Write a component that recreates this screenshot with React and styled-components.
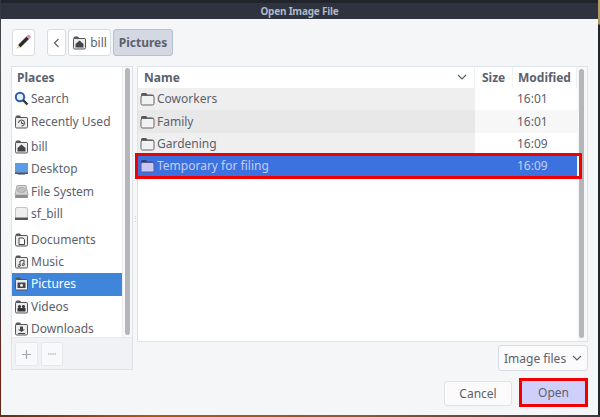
import React from "react";
import styled, { createGlobalStyle } from "styled-components";

const Global = createGlobalStyle`
  html, body { margin: 0; padding: 0; background: #2b2b30; }
  * { box-sizing: border-box; }
`;

const Page = styled.div`
  width: 600px;
  height: 417px;
  overflow: hidden;
  padding-left: 1px;
  padding-right: 2px;
  background:
    linear-gradient(90deg, #5a3414, #b4560f 25%, #8a5a2a 60%, #3a3a40) bottom / 100% 2px no-repeat,
    linear-gradient(180deg, #b5a46a 0, #a8975f 24px, #23252c 25px, #23252c 100%) right / 2px 100% no-repeat,
    linear-gradient(180deg, #2f3340 0, #555 60px, #3a3a42 300px, #7a1e10 370px, #5a2a18 100%);
  font-family: "Noto Sans", "Open Sans", sans-serif;
  font-size: 12px;
  color: #5c616c;
`;

const Dialog = styled.div`
  height: 415px;
  background: #f5f6f7;
  display: flex;
  flex-direction: column;
`;

const TitleBar = styled.div`
  height: 19px;
  background: #2f3340;
  border-top: 3px solid #22242b;
  color: #aeb8c8;
  font-size: 10px;
  font-weight: 700;
  letter-spacing: -0.2px;
  display: flex;
  align-items: center;
  justify-content: center;
`;

const Toolbar = styled.div`
  height: 47px;
  padding: 10px 0 0 11px;
  display: flex;
  align-items: flex-start;
`;

const Crumb = styled.div`
  height: 27px;
  width: ${(p) => p.$w}px;
  margin-right: ${(p) => p.$gap || 0}px;
  display: flex;
  align-items: center;
  justify-content: center;
  gap: 3px;
  background: ${(p) => (p.$active ? "#d3d8e2" : "#fff")};
  border: 1px solid ${(p) => (p.$active ? "#b8bfcc" : "#d6dbe4")};
  border-radius: 3px;
  font-weight: ${(p) => (p.$active ? 700 : 400)};
`;

const Body = styled.div`
  display: flex;
  height: 312px;
  padding-left: 10px;
`;

const Side = styled.div`
  width: 122px;
  height: 304px;
  display: flex;
  flex-direction: column;
  border: 1px solid #dfe2e8;
`;

const SideScrollArea = styled.div`
  flex: 1;
  display: flex;
  min-height: 0;
  background: #fff;
`;

const Places = styled.div`
  width: 111px;
  flex: none;
  overflow: hidden;
  border-right: 1px solid #eceef1;
`;

const PlacesTitle = styled.div`
  height: 21px;
  padding: 2px 0 0 5px;
  font-weight: 700;
`;

const Place = styled.div`
  height: 22.4px;
  display: flex;
  align-items: center;
  gap: 2px;
  padding: 0 0 1px 2px;
  margin-top: ${(p) => p.$gap || 0}px;
  background: ${(p) => (p.$selected ? "#3f85da" : "transparent")};
  color: ${(p) => (p.$selected ? "#fff" : "#5c616c")};
`;

const SideTrack = styled.div`
  flex: 1;
  padding: 1px 2px;
  background: #f7f8f9;
`;

const Thumb = styled.div`
  width: 5px;
  height: ${(p) => p.$h}px;
  background: #b5b6b8;
  border-radius: 3px;
`;

const SideActions = styled.div`
  height: 32px;
  padding: 4px 3px;
  display: flex;
  gap: 3px;
  background: #f0f2f5;
  border-top: 1px solid #e6e8ec;
`;

const SmallButton = styled.div`
  width: ${(p) => p.$w}px;
  height: 24px;
  background: #f8f9fa;
  border: 1px solid #e6e8ec;
  border-radius: 2px;
  display: flex;
  align-items: center;
  justify-content: center;
`;

const Handle = styled.div`
  width: 4px;
  height: 304px;
  display: flex;
  align-items: center;
  justify-content: center;
  color: #c2c5ca;
  font-size: 7px;
`;

const Right = styled.div`
  width: 451px;
  display: flex;
  flex-direction: column;
`;

const Files = styled.div`
  height: 276px;
  display: flex;
  background: #fff;
  border: 1px solid #dfe2e8;
`;

const Table = styled.div`
  width: 439px;
  flex: none;
  position: relative;
`;

const HeaderRow = styled.div`
  height: 21px;
  display: flex;
  font-weight: 700;
  background: #fff;
`;

const HeaderCell = styled.div`
  width: ${(p) => p.$w}px;
  flex: ${(p) => (p.$grow ? 1 : "none")};
  display: flex;
  align-items: center;
  justify-content: space-between;
  padding: 0 ${(p) => (p.$grow ? 7 : 0)}px 1px ${(p) => p.$pad}px;
  border-right: 1px solid #f0f1f3;
`;

const Row = styled.div`
  height: 22.4px;
  display: flex;
  align-items: center;
  background: ${(p) => (p.$selected ? "#3b72e0" : p.$odd ? "#f7f7f8" : "#fff")};
  color: ${(p) => (p.$selected ? "#c5cdf0" : "#5c616c")};
`;

const NameCell = styled.div`
  width: 337px;
  height: 100%;
  display: flex;
  align-items: center;
  gap: 2px;
  padding: 0 0 1px 2px;
  background: ${(p) => (p.$selected ? "transparent" : p.$odd ? "#e8e8e8" : "#efefef")};
`;

const TimeCell = styled.div`
  margin-left: 42px;
  padding-bottom: 1px;
`;

const Highlight = styled.div`
  position: absolute;
  left: -3px;
  right: -5px;
  top: 86px;
  height: 26px;
  border: 3px solid #f00000;
  pointer-events: none;
`;

const FileTrack = styled.div`
  flex: 1;
  padding: 2px 2px;
  background: #f7f8f9;
`;

const Filter = styled.div`
  height: 36px;
  padding-top: 3px;
  display: flex;
  justify-content: flex-end;
`;

const Select = styled.div`
  width: 90px;
  height: 26px;
  background: #fbfbfc;
  border: 1px solid #d6dbe4;
  border-radius: 3px;
  display: flex;
  align-items: center;
  justify-content: space-between;
  padding: 0 5px;
`;

const Footer = styled.div`
  display: flex;
  justify-content: flex-end;
  gap: 7px;
  padding-right: 10px;
`;

const Button = styled.div`
  width: ${(p) => p.$w}px;
  height: ${(p) => (p.$open ? 29 : 25)}px;
  margin-top: ${(p) => (p.$open ? 0 : 3)}px;
  display: flex;
  align-items: center;
  justify-content: center;
  background: ${(p) => (p.$open ? "#cfcffb" : "#fbfbfc")};
  border: ${(p) => (p.$open ? "3px solid #f00000" : "1px solid #dfe2e8")};
  border-radius: ${(p) => (p.$open ? 0 : 3)}px;
`;

function Folder({ selected }) {
  return (
    <svg width="15" height="15" viewBox="0 0 15 15">
      <path d="M1 3.5 Q1 2 2.5 2 H6 L7.5 3.5 H12.5 Q14 3.5 14 5 V5 H1 Z" fill={selected ? "#3d3d6a" : "#55555a"} />
      <rect x="1" y="4.5" width="13" height="9.5" rx="1.5" fill={selected ? "#c9c6f4" : "#f2f2f2"} stroke={selected ? "#5a5a90" : "#66666a"} />
    </svg>
  );
}

function PlaceIcon({ kind }) {
  if (kind === "search") {
    return (
      <svg width="15" height="15" viewBox="0 0 15 15">
        <circle cx="6" cy="6" r="4.2" fill="#e6eef8" stroke="#2e5db0" strokeWidth="2" />
        <path d="M9 9 L13.5 13.5" stroke="#33363d" strokeWidth="2.4" />
      </svg>
    );
  }
  if (kind === "desktop") {
    return (
      <svg width="15" height="15" viewBox="0 0 15 15">
        <rect x="1" y="2" width="13" height="10" fill="#5c9be6" />
        <rect x="1" y="11.5" width="13" height="1.5" fill="#555" />
        <rect x="4" y="13" width="7" height="1" fill="#999" />
      </svg>
    );
  }
  if (kind === "disk") {
    return (
      <svg width="15" height="15" viewBox="0 0 15 15">
        <path d="M3 1.5 H12 L14 11 H1 Z" fill="#d4d4d4" stroke="#aaa" />
        <ellipse cx="7.5" cy="6" rx="4" ry="2.5" fill="#c2c2c2" stroke="#ababab" />
        <rect x="1" y="11" width="13" height="3" rx="1" fill="#8e8e8e" />
      </svg>
    );
  }
  if (kind === "drive") {
    return (
      <svg width="15" height="15" viewBox="0 0 15 15">
        <rect x="1.5" y="1.5" width="12" height="12" rx="1.5" fill="#efefef" stroke="#c4c4c4" />
        <rect x="1" y="11.5" width="13" height="2.5" fill="#55555a" />
      </svg>
    );
  }
  const marks = {
    home: <path d="M7.5 5.5 L11.5 9 V12.5 H3.5 V9 Z" fill="#44444a" />,
    recent: <path d="M4.5 9 A3 3 0 1 1 7.5 12 M7.5 7.5 V9.5 H9.5" fill="none" stroke="#44444a" />,
    documents: <path d="M5 6 H9 L10.5 7.5 V12.5 H5 Z" fill="#fff" stroke="#44444a" />,
    music: <path d="M6 11 V7 L10 6 V10 M6 11 A1 1 0 1 1 5.9 10.9 M10 10 A1 1 0 1 1 9.9 9.9" fill="none" stroke="#44444a" />,
    pictures: <g><rect x="3.5" y="6.5" width="8" height="5.5" fill="#44444a" /><circle cx="7.5" cy="9.2" r="1.5" fill="#eee" /></g>,
    videos: <g><circle cx="5.5" cy="7.5" r="1.6" fill="#33333a" /><circle cx="9.5" cy="7.5" r="1.6" fill="#33333a" /><rect x="3.5" y="9" width="8" height="3.5" fill="#33333a" /></g>,
    downloads: <path d="M6 5.5 H9 V8.5 H11 L7.5 11 L4 8.5 H6 Z M4 12 H11 V13 H4 Z" fill="#44444a" />,
  };
  return (
    <svg width="15" height="15" viewBox="0 0 15 15">
      <path d="M1.5 3 Q1.5 1.5 3 1.5 H6 L7 3 H12 Q13.5 3 13.5 4.5 V5 H1.5 Z" fill="#55555a" />
      <rect x="1.5" y="3.5" width="12" height="10.5" rx="1.2" fill="#ececec" stroke="#55555a" />
      {marks[kind]}
    </svg>
  );
}

const places = [
  { label: "Search", kind: "search" },
  { label: "Recently Used", kind: "recent" },
  { label: "bill", kind: "home", gap: 3 },
  { label: "Desktop", kind: "desktop" },
  { label: "File System", kind: "disk" },
  { label: "sf_bill", kind: "drive" },
  { label: "Documents", kind: "documents", gap: 3 },
  { label: "Music", kind: "music" },
  { label: "Pictures", kind: "pictures", selected: true },
  { label: "Videos", kind: "videos" },
  { label: "Downloads", kind: "downloads" },
];

const files = [
  { name: "Coworkers", time: "16:01" },
  { name: "Family", time: "16:01", odd: true },
  { name: "Gardening", time: "16:09" },
  { name: "Temporary for filing", time: "16:09", selected: true },
];

function Chevron() {
  return (
    <svg width="10" height="7" viewBox="0 0 10 7">
      <path d="M1 1 L5 5 L9 1" fill="none" stroke="#5c616c" strokeWidth="1.2" />
    </svg>
  );
}

function Pencil() {
  return (
    <svg width="17" height="17" viewBox="0 0 17 17">
      <path d="M3 11 L11.5 2.5 L14 5 L5.5 13.5 Z" fill="#2c2c2c" />
      <path d="M11.5 2.5 L13 1 Q14 .5 15 1.5 Q16 2.5 15.5 3.5 L14 5 Z" fill="#e58aa5" />
      <path d="M3 11 L1.5 15 L5.5 13.5 Z" fill="#ecd28a" />
    </svg>
  );
}

export default function App() {
  return (
    <Page>
      <Global />
      <Dialog>
        <TitleBar>Open Image File</TitleBar>
        <Toolbar>
          <Crumb $w={23} $gap={12}><Pencil /></Crumb>
          <Crumb $w={19} $gap={2}>
            <svg width="7" height="10" viewBox="0 0 7 10">
              <path d="M5.5 1 L1.5 5 L5.5 9" fill="none" stroke="#5c616c" strokeWidth="1.2" />
            </svg>
          </Crumb>
          <Crumb $w={43} $gap={2}><PlaceIcon kind="home" />bill</Crumb>
          <Crumb $w={60} $active>Pictures</Crumb>
        </Toolbar>
        <Body>
          <Side>
            <SideScrollArea>
              <Places>
                <PlacesTitle>Places</PlacesTitle>
                {places.map((p) => (
                  <Place key={p.label} $gap={p.gap} $selected={p.selected}>
                    <PlaceIcon kind={p.kind} />
                    {p.label}
                  </Place>
                ))}
              </Places>
              <SideTrack><Thumb $h={267} /></SideTrack>
            </SideScrollArea>
            <SideActions>
              <SmallButton $w={23}>
                <svg width="11" height="11" viewBox="0 0 11 11">
                  <path d="M5.5 1 V10 M1 5.5 H10" stroke="#a5a8ad" strokeWidth="1.2" />
                </svg>
              </SmallButton>
              <SmallButton $w={22}>
                <svg width="10" height="4" viewBox="0 0 10 4">
                  <path d="M1 2 H9" stroke="#a5a8ad" strokeWidth="1.2" strokeDasharray="1.6 .6" />
                </svg>
              </SmallButton>
            </SideActions>
          </Side>
          <Handle>⋮</Handle>
          <Right>
            <Files>
              <Table>
                <HeaderRow>
                  <HeaderCell $grow $pad={6}>Name<Chevron /></HeaderCell>
                  <HeaderCell $w={38} $pad={7}>Size</HeaderCell>
                  <HeaderCell $w={64} $pad={5}>Modified</HeaderCell>
                </HeaderRow>
                {files.map((f) => (
                  <Row key={f.name} $odd={f.odd} $selected={f.selected}>
                    <NameCell $odd={f.odd} $selected={f.selected}>
                      <Folder selected={f.selected} />
                      {f.name}
                    </NameCell>
                    <TimeCell>{f.time}</TimeCell>
                  </Row>
                ))}
                <Highlight />
              </Table>
              <FileTrack><Thumb $h={269} /></FileTrack>
            </Files>
            <Filter>
              <Select>Image files<Chevron /></Select>
            </Filter>
          </Right>
        </Body>
        <Footer>
          <Button $w={68}>Cancel</Button>
          <Button $w={69} $open>Open</Button>
        </Footer>
      </Dialog>
    </Page>
  );
}
